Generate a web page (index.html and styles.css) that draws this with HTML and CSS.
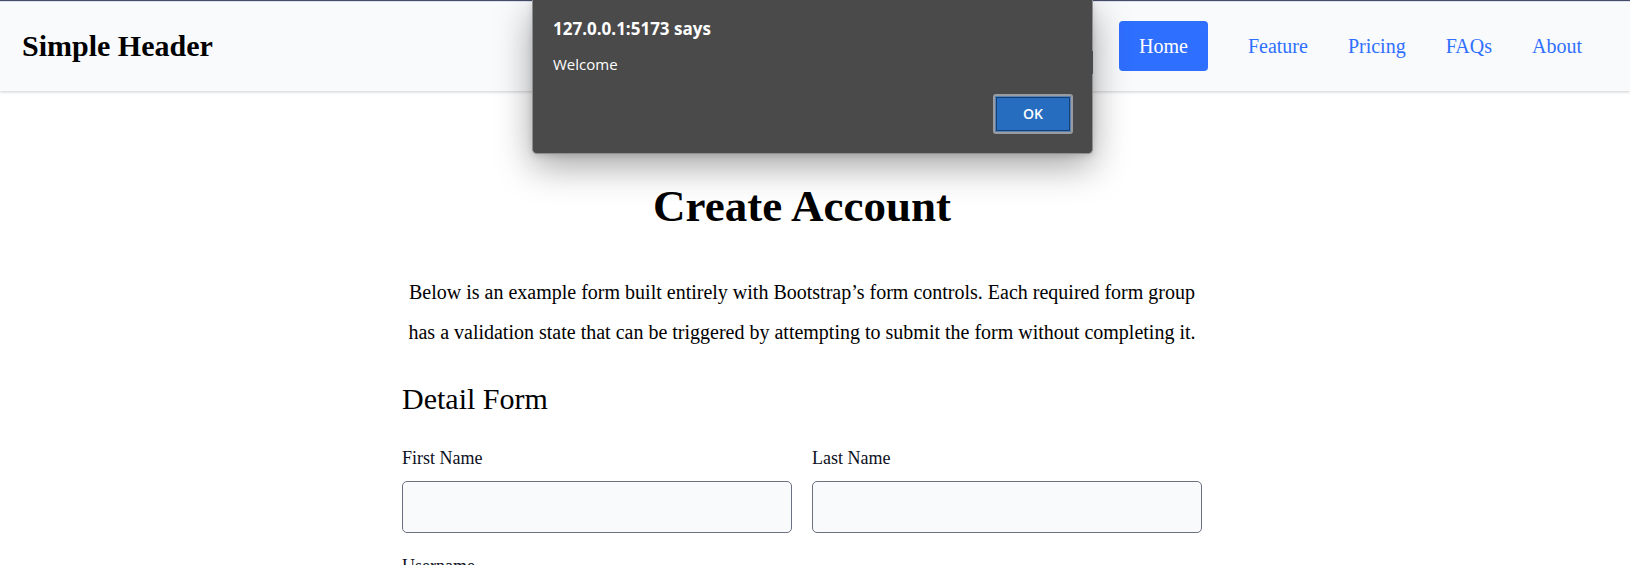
FILE: index.html
```html
<!DOCTYPE html>
<html lang="en">
<head>
<meta charset="utf-8">
<meta name="viewport" content="width=device-width, initial-scale=1">
<title>Create Account</title>
<link rel="stylesheet" href="styles.css">
</head>
<body>
<header class="header">
  <div class="brand">Simple Header</div>
  <nav class="nav">
    <a class="nav-link nav-link-active" href="#">Home</a>
    <a class="nav-link" href="#">Feature</a>
    <a class="nav-link" href="#">Pricing</a>
    <a class="nav-link" href="#">FAQs</a>
    <a class="nav-link" href="#">About</a>
  </nav>
</header>
<main class="main">
  <div class="content">
    <h1 class="title">Create Account</h1>
    <p class="intro">Below is an example form built entirely with Bootstrap’s form controls. Each required form group has a validation state that can be triggered by attempting to submit the form without completing it.</p>
    <h2 class="subtitle">Detail Form</h2>
    <form class="form">
      <div class="field">
        <label for="first-name">First Name</label>
        <input id="first-name" type="text">
      </div>
      <div class="field">
        <label for="last-name">Last Name</label>
        <input id="last-name" type="text">
      </div>
      <div class="field field-wide">
        <label for="username">Username</label>
        <input id="username" type="text">
      </div>
    </form>
  </div>
</main>
<div class="alert" role="alertdialog" aria-labelledby="alert-title" aria-describedby="alert-text">
  <div class="alert-title" id="alert-title">127.0.0.1:5173 says</div>
  <div class="alert-text" id="alert-text">Welcome</div>
  <button class="alert-ok" type="button">OK</button>
</div>
</body>
</html>
```
FILE: styles.css
```css
* {
  box-sizing: border-box;
}

html {
  scrollbar-width: none;
}

body {
  margin: 0;
  background: #fff;
  color: #000;
  font-family: "Liberation Serif", "Times New Roman", serif;
}

.header {
  display: flex;
  align-items: center;
  justify-content: space-between;
  padding: 20px 48px 20px 22px;
  border-top: 1px solid #434d66;
  background: #f9fafc;
  box-shadow: 0 1px 3px rgba(0, 0, 0, 0.2), inset 0 1px 0 #e0e1ef;
}

.brand {
  font-size: 30px;
  font-weight: 700;
  line-height: 36px;
}

.nav {
  display: flex;
  align-items: center;
  gap: 40px;
}

.nav-link {
  color: #2f6fff;
  font-size: 20px;
  line-height: 50px;
  text-decoration: none;
}

.nav-link-active {
  padding: 0 20px;
  border-radius: 4px;
  background: #2f6fff;
  color: #fff;
}

.main {
  padding: 89px 26px 40px 0;
}

.content {
  max-width: 800px;
  margin: 0 auto;
}

.title {
  margin: 0;
  font-size: 45px;
  line-height: 52px;
  text-align: center;
}

.intro {
  margin: 40px 0 0;
  font-size: 20px;
  line-height: 40px;
  text-align: center;
}

.subtitle {
  margin: 29px 0 31px;
  font-size: 30px;
  font-weight: 400;
  line-height: 36px;
}

.form {
  display: grid;
  grid-template-columns: 1fr 1fr;
  gap: 23px 20px;
}

.field {
  display: flex;
  flex-direction: column;
  gap: 13px;
}

.field-wide {
  grid-column: 1 / -1;
}

.field label {
  color: #0b0f1c;
  font-size: 18px;
  line-height: 20px;
}

.field input {
  width: 100%;
  height: 52px;
  padding: 0 12px;
  border: 1px solid #6b7080;
  border-radius: 5px;
  background: #f9fafc;
  font: inherit;
  font-size: 18px;
}

.alert {
  position: absolute;
  top: 0;
  left: calc(50% - 283px);
  display: flex;
  flex-direction: column;
  width: 561px;
  padding: 18px 19px 19px 20px;
  border: 1px solid #8f8f8f;
  border-top: 0;
  border-radius: 0 0 5px 5px;
  background: #4a4a4a;
  box-shadow: 0 12px 36px rgba(0, 0, 0, 0.36), 0 2px 6px rgba(0, 0, 0, 0.12);
  color: #fff;
  font-family: "Open Sans", "Noto Sans", sans-serif;
}

.alert::after {
  position: absolute;
  top: 51px;
  right: -1px;
  width: 1px;
  height: 23px;
  background: #4a4a4a;
  content: "";
}

.alert-title {
  font-size: 17px;
  font-weight: 700;
  line-height: 22px;
}

.alert-text {
  margin-top: 14px;
  font-size: 15px;
  line-height: 20px;
}

.alert-ok {
  align-self: flex-end;
  width: 80px;
  height: 40px;
  margin-top: 20px;
  padding: 0 0 2px;
  border: 2px solid #989ca1;
  border-radius: 3px;
  background: #266dc0;
  box-shadow: inset 0 0 0 1px #5a83b5, inset 0 0 0 2px #163f73;
  color: #fff;
  font-family: inherit;
  font-size: 14px;
  font-weight: 600;
}
```
